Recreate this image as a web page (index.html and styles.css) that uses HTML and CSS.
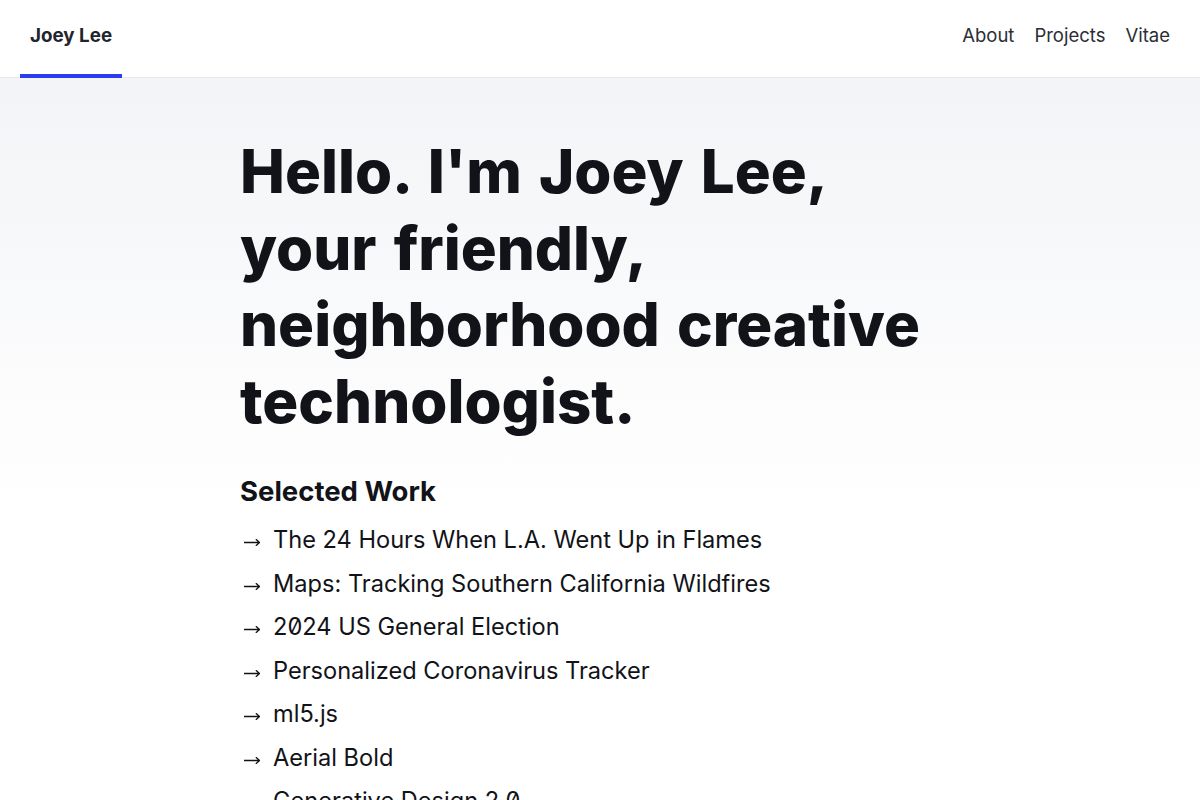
FILE: index.html
```html
<!DOCTYPE html>
<html lang="en">
<head>
<meta charset="utf-8">
<title>Joey Lee</title>
<link rel="stylesheet" href="styles.css">
</head>
<body>
<header class="site-header">
  <a class="brand" href="#">Joey Lee</a>
  <nav class="nav">
    <a href="#">About</a>
    <a href="#">Projects</a>
    <a href="#">Vitae</a>
  </nav>
</header>
<main class="main">
  <div class="container">
    <h1 class="hero">Hello. I'm Joey Lee, your friendly, neighborhood creative technologist.</h1>
    <h2 class="section-title">Selected Work</h2>
    <ul class="work">
      <li><svg class="arrow" viewBox="0 0 16 7" aria-hidden="true"><path d="M0 3.5H15.5M12.2 0.6L15.5 3.5L12.2 6.4"/></svg><a href="#">The 24 Hours When L.A. Went Up in Flames</a></li>
      <li><svg class="arrow" viewBox="0 0 16 7" aria-hidden="true"><path d="M0 3.5H15.5M12.2 0.6L15.5 3.5L12.2 6.4"/></svg><a href="#">Maps: Tracking Southern California Wildfires</a></li>
      <li><svg class="arrow" viewBox="0 0 16 7" aria-hidden="true"><path d="M0 3.5H15.5M12.2 0.6L15.5 3.5L12.2 6.4"/></svg><a href="#">2024 US General Election</a></li>
      <li><svg class="arrow" viewBox="0 0 16 7" aria-hidden="true"><path d="M0 3.5H15.5M12.2 0.6L15.5 3.5L12.2 6.4"/></svg><a href="#">Personalized Coronavirus Tracker</a></li>
      <li><svg class="arrow" viewBox="0 0 16 7" aria-hidden="true"><path d="M0 3.5H15.5M12.2 0.6L15.5 3.5L12.2 6.4"/></svg><a href="#">ml5.js</a></li>
      <li><svg class="arrow" viewBox="0 0 16 7" aria-hidden="true"><path d="M0 3.5H15.5M12.2 0.6L15.5 3.5L12.2 6.4"/></svg><a href="#">Aerial Bold</a></li>
      <li><svg class="arrow" viewBox="0 0 16 7" aria-hidden="true"><path d="M0 3.5H15.5M12.2 0.6L15.5 3.5L12.2 6.4"/></svg><a href="#">Generative Design 2.0</a></li>
    </ul>
  </div>
</main>
</body>
</html>
```
FILE: styles.css
```css
* { box-sizing: border-box; }
html, body { margin: 0; padding: 0; }
body {
  font-family: Inter, "Noto Sans", sans-serif;
  font-feature-settings: "zero" 1;
  color: #111318;
  background: #fff;
}
a { color: inherit; text-decoration: none; }

.site-header {
  height: 78px;
  display: flex;
  align-items: stretch;
  justify-content: space-between;
  padding: 0 20px;
  background: #fff;
  border-bottom: 1px solid #e6e8ec;
}
.brand {
  display: flex;
  align-items: center;
  padding: 0 10px 4px;
  font-size: 18.8px;
  font-weight: 700;
  color: #23252d;
  border-bottom: 4px solid #2a3cf0;
  margin-bottom: -1px;
}
.nav { display: flex; align-items: stretch; }
.nav a {
  display: flex;
  align-items: center;
  padding: 0 10px 8px;
  font-size: 18.5px;
  color: #2b2d35;
}

.main {
  background: linear-gradient(to bottom, #f3f4f7 0px, #ffffff 440px);
  min-height: 722px;
  padding-top: 55px;
}
.container {
  max-width: 720px;
  margin: 0 auto;
}
.hero {
  margin: 0;
  font-size: 60px;
  line-height: 76.5px;
  font-weight: 800;
  letter-spacing: 0;
  word-spacing: 4px;
  color: #111318;
}
.section-title {
  margin: 33px 0 8px;
  font-size: 27.5px;
  line-height: 38px;
  font-weight: 700;
}
.work {
  list-style: none;
  margin: 0;
  padding: 0;
}
.work li {
  font-size: 23.6px;
  line-height: 43.5px;
  white-space: nowrap;
}
.work .arrow {
  width: 16px;
  height: 7px;
  margin: 0 13px 0 4px;
  vertical-align: 2px;
  fill: none;
  stroke: #111318;
  stroke-width: 1.3;
  stroke-linecap: round;
  stroke-linejoin: round;
}
```
